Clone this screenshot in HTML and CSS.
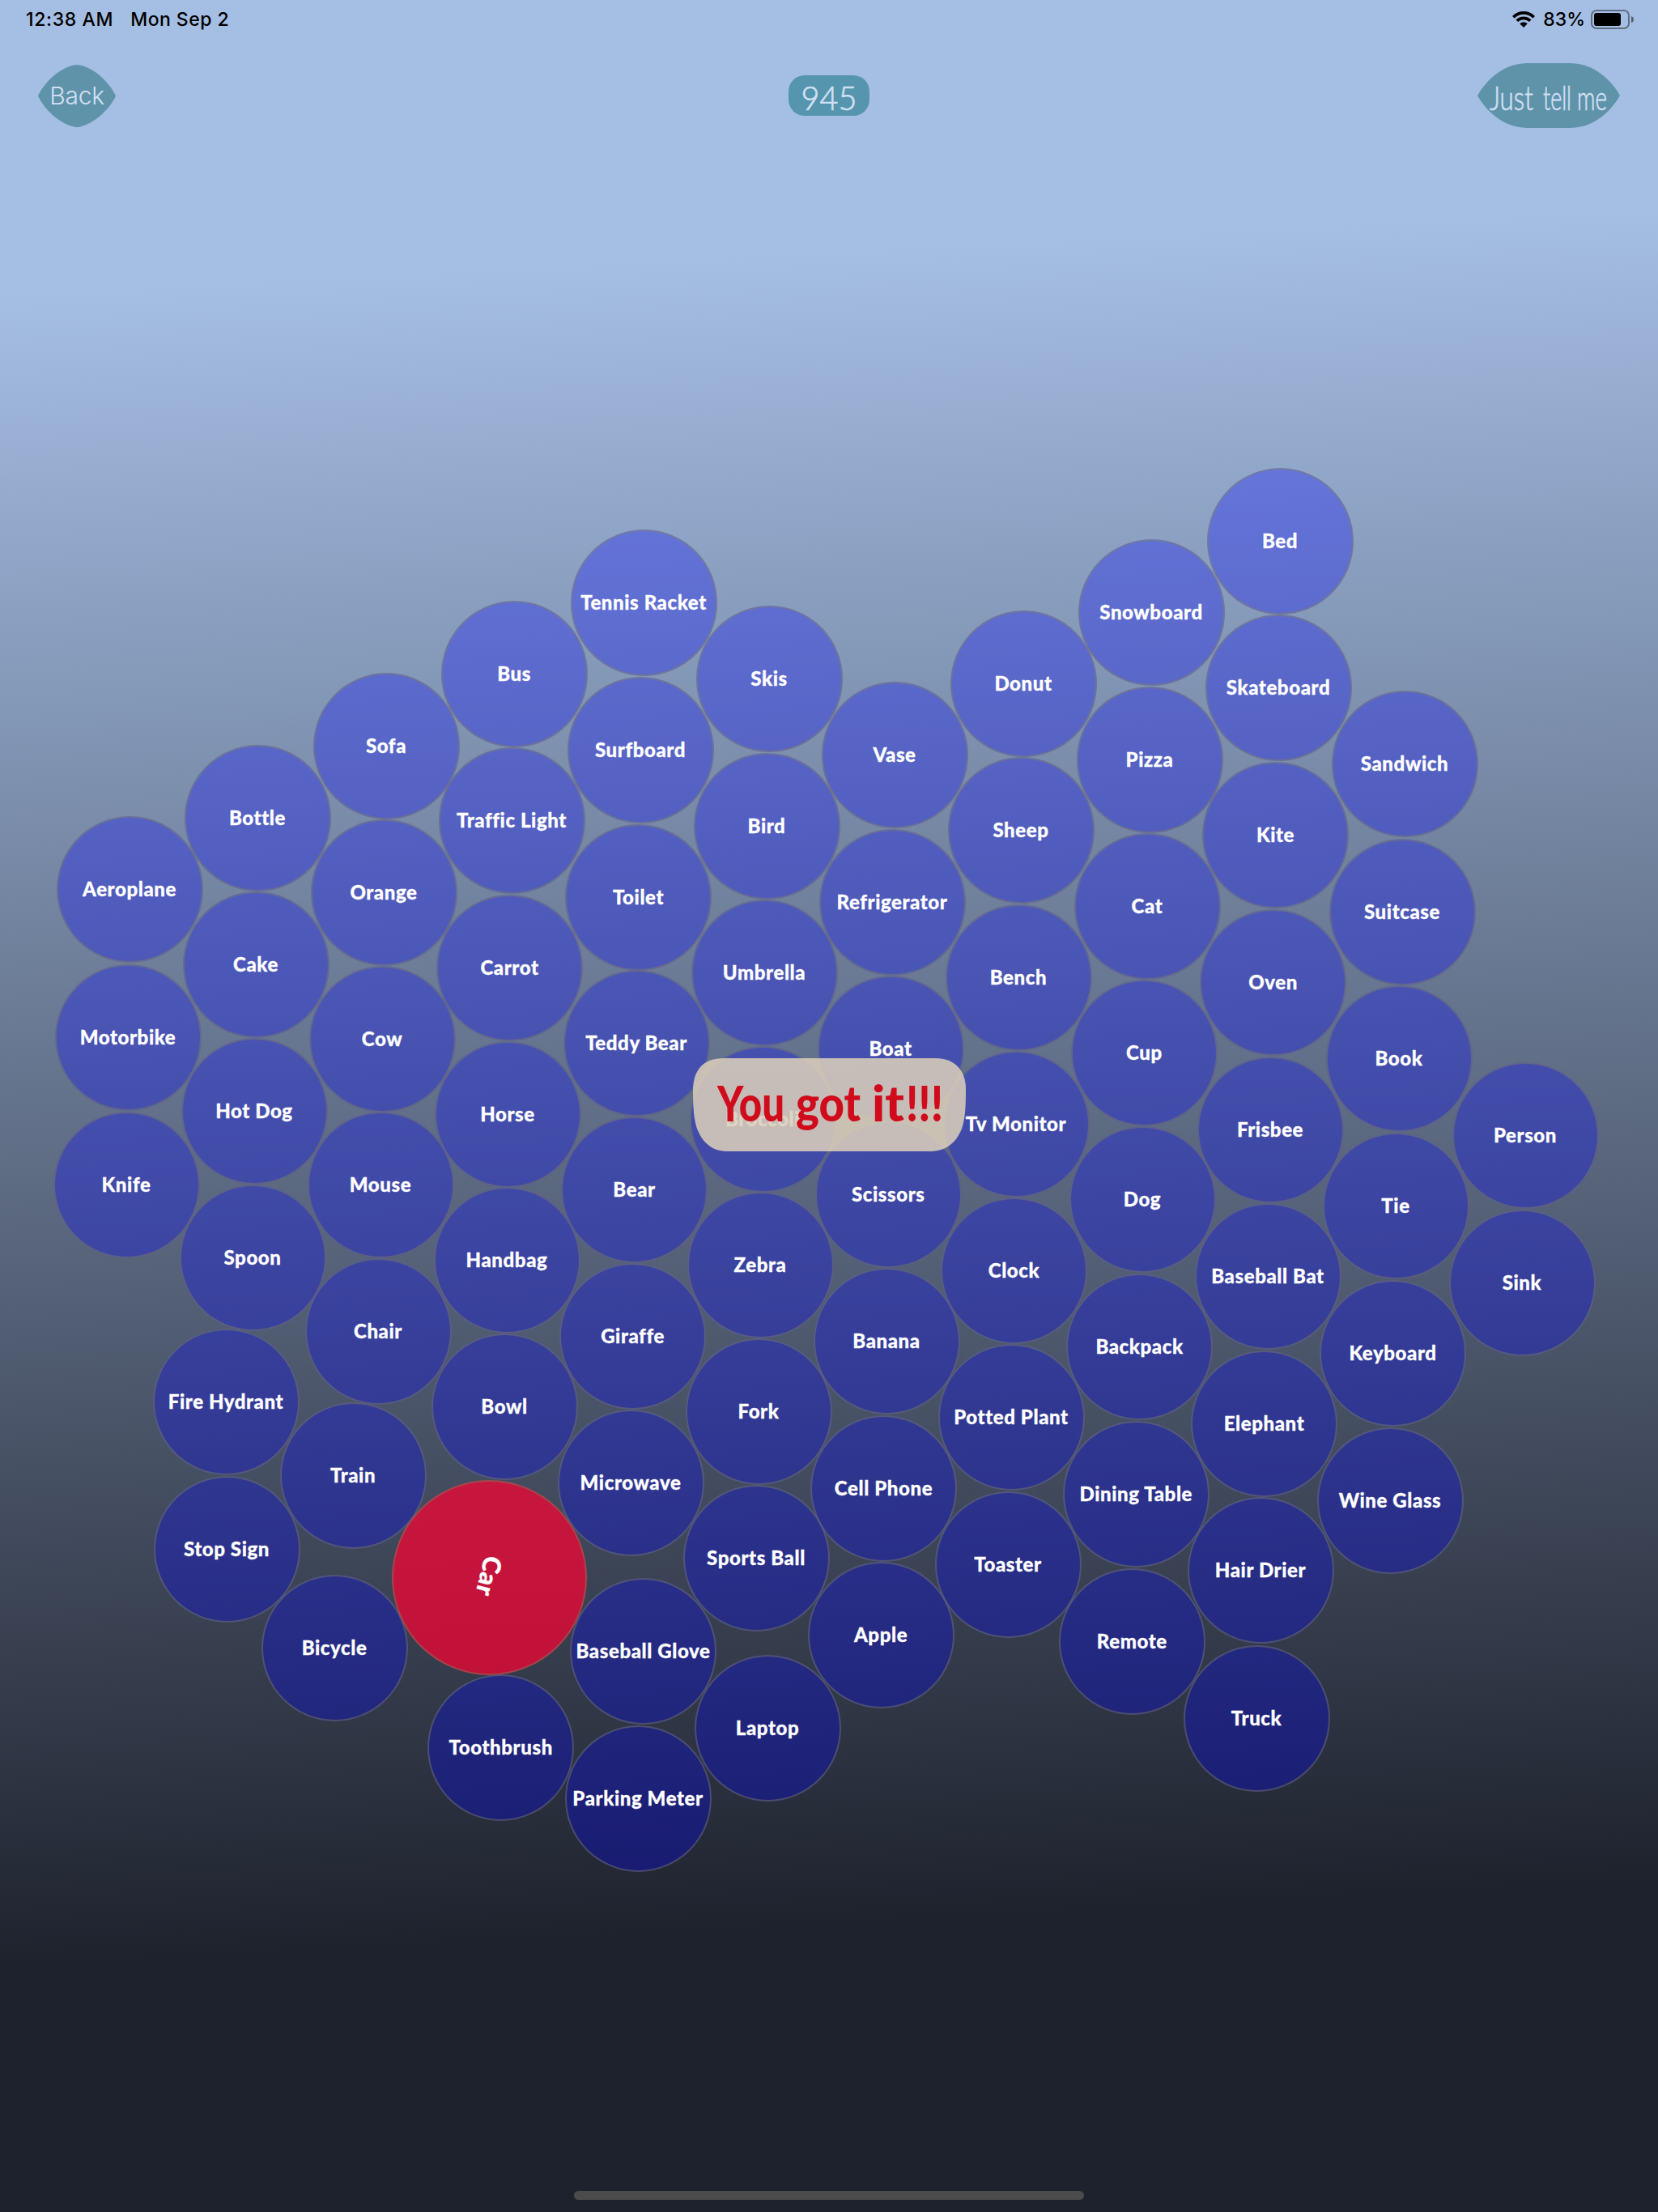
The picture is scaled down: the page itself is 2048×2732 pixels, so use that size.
FILE: index.html
```
<!DOCTYPE html>
<html lang="en">
<head>
<meta charset="utf-8">
<title>Bubbles</title>
<link rel="stylesheet" href="styles.css">
</head>
<body>
<div class="screen">
  <header class="status">
    <span class="time">12:38 AM</span>
    <span class="date">Mon Sep 2</span>
    <span class="spacer"></span>
    <svg class="wifi" viewBox="0 0 28 20" width="28" height="20">
      <g fill="none" stroke="#000" stroke-width="3.7">
        <path d="M1.3 7.2A18 18 0 0 1 26.700 7.200"/>
        <path d="M5.800 11.800A11.700 11.700 0 0 1 22.200 11.800"/>
      </g>
      <path d="M9.200 15.200A7 7 0 0 1 18.800 15.200L14 20Z"/>
    </svg>
    <span class="percent">83%</span>
    <svg class="battery" viewBox="0 0 54 24" width="54" height="24">
      <rect x="1" y="1" width="46" height="22" rx="6" fill="none" stroke="#000" stroke-opacity=".42" stroke-width="2"/>
      <rect x="4" y="4" width="33" height="16" rx="3"/>
      <path d="M50 8q3 1 3 4t-3 4z" fill-opacity=".5"/>
    </svg>
  </header>

  <nav class="toolbar">
    <button class="leaf back">
      <svg class="shape" viewBox="0 0 96 77"><path d="M0 38.500C9 20 27 4.500 44 .6Q48-.6 52 .6C69 4.500 87 20 96 38.500C87 57 69 72.500 52 76.400Q48 77.600 44 76.400C27 72.500 9 57 0 38.500Z"/></svg>
      <span>Back</span>
    </button>
    <div class="score"><svg viewBox="0 0 100 50" width="100" height="50"><text x="15.500" y="43" textLength="69" lengthAdjust="spacingAndGlyphs">945</text></svg></div>
    <button class="leaf tell">
      <svg class="shape" viewBox="0 0 176 80">
        <path d="M0 40C15 14 38 0 62 0H114C138 0 161 14 176 40C161 66 138 80 114 80H62C38 80 15 66 0 40Z"/>
        <text x="15" y="57.500" textLength="54" lengthAdjust="spacingAndGlyphs">Just</text>
        <text x="81" y="57.500" textLength="35" lengthAdjust="spacingAndGlyphs">tell</text>
        <text x="123" y="57.500" textLength="37" lengthAdjust="spacingAndGlyphs">me</text>
      </svg>
    </button>
  </nav>

  <main class="canvas">
    <div class="bubble" style="--x:1581;--y:669">Bed</div>
    <div class="bubble" style="--x:1422;--y:757">Snowboard</div>
    <div class="bubble" style="--x:1579;--y:850">Skateboard</div>
    <div class="bubble" style="--x:1420;--y:939">Pizza</div>
    <div class="bubble" style="--x:1735;--y:944">Sandwich</div>
    <div class="bubble" style="--x:1575.500;--y:1032">Kite</div>
    <div class="bubble" style="--x:1417;--y:1120">Cat</div>
    <div class="bubble" style="--x:160;--y:1099">Aeroplane</div>
    <div class="bubble" style="--x:158;--y:1282">Motorbike</div>
    <div class="bubble" style="--x:156;--y:1463.500">Knife</div>
    <div class="bubble" style="--x:318;--y:1011">Bottle</div>
    <div class="bubble" style="--x:316;--y:1192">Cake</div>
    <div class="bubble" style="--x:314;--y:1373">Hot Dog</div>
    <div class="bubble" style="--x:312;--y:1553.500">Spoon</div>
    <div class="bubble" style="--x:477;--y:922">Sofa</div>
    <div class="bubble" style="--x:474;--y:1103">Orange</div>
    <div class="bubble" style="--x:472;--y:1284">Cow</div>
    <div class="bubble" style="--x:470;--y:1464">Mouse</div>
    <div class="bubble" style="--x:467;--y:1645">Chair</div>
    <div class="bubble" style="--x:635;--y:833">Bus</div>
    <div class="bubble" style="--x:632;--y:1014">Traffic Light</div>
    <div class="bubble" style="--x:629.500;--y:1196">Carrot</div>
    <div class="bubble" style="--x:627;--y:1377">Horse</div>
    <div class="bubble" style="--x:626;--y:1556.500">Handbag</div>
    <div class="bubble" style="--x:623;--y:1737.500">Bowl</div>
    <div class="bubble" style="--x:795;--y:745">Tennis Racket</div>
    <div class="bubble" style="--x:791;--y:927">Surfboard</div>
    <div class="bubble" style="--x:788.500;--y:1108.500">Toilet</div>
    <div class="bubble" style="--x:786;--y:1289">Teddy Bear</div>
    <div class="bubble" style="--x:783.500;--y:1470">Bear</div>
    <div class="bubble" style="--x:781.500;--y:1651">Giraffe</div>
    <div class="bubble" style="--x:779;--y:1831.500">Microwave</div>
    <div class="bubble" style="--x:794.500;--y:2040">Baseball Glove</div>
    <div class="bubble" style="--x:618.700;--y:2159">Toothbrush</div>
    <div class="bubble" style="--x:788;--y:2221.500">Parking Meter</div>
    <div class="bubble" style="--x:950;--y:839">Skis</div>
    <div class="bubble" style="--x:947;--y:1021">Bird</div>
    <div class="bubble" style="--x:944;--y:1202">Umbrella</div>
    <div class="bubble" style="--x:942;--y:1382.500">Broccoli</div>
    <div class="bubble" style="--x:939;--y:1563">Zebra</div>
    <div class="bubble" style="--x:937;--y:1744">Fork</div>
    <div class="bubble" style="--x:934;--y:1925">Sports Ball</div>
    <div class="bubble" style="--x:948;--y:2135">Laptop</div>
    <div class="bubble" style="--x:1105;--y:933">Vase</div>
    <div class="bubble" style="--x:1102;--y:1114.500">Refrigerator</div>
    <div class="bubble" style="--x:1100;--y:1295.500">Boat</div>
    <div class="bubble" style="--x:1097.300;--y:1476">Scissors</div>
    <div class="bubble" style="--x:1095;--y:1657">Banana</div>
    <div class="bubble" style="--x:1091.500;--y:1838.500">Cell Phone</div>
    <div class="bubble" style="--x:1088;--y:2020">Apple</div>
    <div class="bubble" style="--x:1264;--y:845">Donut</div>
    <div class="bubble" style="--x:1261;--y:1026">Sheep</div>
    <div class="bubble" style="--x:1258;--y:1208">Bench</div>
    <div class="bubble" style="--x:1255;--y:1389">Tv Monitor</div>
    <div class="bubble" style="--x:1252.500;--y:1570">Clock</div>
    <div class="bubble" style="--x:1249;--y:1751">Potted Plant</div>
    <div class="bubble" style="--x:1245;--y:1933">Toaster</div>
    <div class="bubble" style="--x:1413.500;--y:1301">Cup</div>
    <div class="bubble" style="--x:1411;--y:1482">Dog</div>
    <div class="bubble" style="--x:1407.500;--y:1663.500">Backpack</div>
    <div class="bubble" style="--x:1403.300;--y:1845.500">Dining Table</div>
    <div class="bubble" style="--x:1398.300;--y:2027.500">Remote</div>
    <div class="bubble" style="--x:1572.500;--y:1214">Oven</div>
    <div class="bubble" style="--x:1569;--y:1396">Frisbee</div>
    <div class="bubble" style="--x:1566;--y:1577">Baseball Bat</div>
    <div class="bubble" style="--x:1561.500;--y:1759">Elephant</div>
    <div class="bubble" style="--x:1557;--y:1940">Hair Drier</div>
    <div class="bubble" style="--x:1552;--y:2122.500">Truck</div>
    <div class="bubble" style="--x:1732;--y:1127">Suitcase</div>
    <div class="bubble" style="--x:1728;--y:1308">Book</div>
    <div class="bubble" style="--x:1724;--y:1490">Tie</div>
    <div class="bubble" style="--x:1720.500;--y:1671.500">Keyboard</div>
    <div class="bubble" style="--x:1717;--y:1854">Wine Glass</div>
    <div class="bubble" style="--x:1884;--y:1403">Person</div>
    <div class="bubble" style="--x:1880;--y:1584.500">Sink</div>
    <div class="bubble" style="--x:279;--y:1731.500">Fire Hydrant</div>
    <div class="bubble" style="--x:436;--y:1823">Train</div>
    <div class="bubble" style="--x:280;--y:1913.500">Stop Sign</div>
    <div class="bubble" style="--x:413;--y:2036">Bicycle</div>
    <div class="bubble hit" style="--x:604.500;--y:1948.500"><span>Car</span></div>

    <svg class="toast" viewBox="0 0 337 115" width="337" height="115">
      <path d="M0 40C0 14 13 0 38 0H300C322 0 337 14 337 38C337 62 336 75 332 87C325 105 312 115 292 115H43C24 115 12 105 5 87C1 75 0 62 0 40Z"/>
      <text x="30" y="78" textLength="83" lengthAdjust="spacingAndGlyphs">You</text>
      <text x="127" y="78" textLength="80" lengthAdjust="spacingAndGlyphs">got</text>
      <text x="221" y="78" textLength="40" lengthAdjust="spacingAndGlyphs">it</text>
      <text x="263" y="78" textLength="46" lengthAdjust="spacingAndGlyphs">!!!</text>
    </svg>
  </main>
  <div class="home"></div>
</div>
</body>
</html>
```
FILE: styles.css
```
* { box-sizing: border-box; }

body { margin: 0; }

.screen {
  position: relative;
  display: flex;
  flex-direction: column;
  width: 2048px;
  height: 2732px;
  overflow: hidden;
  background: linear-gradient(177deg, #a5bee4 362px, #1e222d 2428px);
  font-family: Inter, "Liberation Sans", sans-serif;
}

.status {
  display: flex;
  align-items: center;
  height: 48px;
  padding: 0 29px 0 32px;
  color: #000;
  font-size: 23px;
  font-weight: 500;
}
.time { letter-spacing: .65px; }
.date { margin-left: 21px; letter-spacing: .45px; }
.spacer { flex: 1; }
.percent { margin: 0 7px 0 10px; }

.toolbar {
  display: flex;
  align-items: center;
  justify-content: space-between;
  height: 140px;
  padding: 0 47px;
}

.leaf {
  position: relative;
  display: grid;
  place-items: center;
  padding: 0;
  border: 0;
  background: none;
  color: #d3e0f5;
  font: 400 30px Inter, sans-serif;
}
.leaf .shape {
  grid-area: 1 / 1;
  width: 100%;
  height: 100%;
  fill: #5f93aa;
}
.leaf span { grid-area: 1 / 1; font-weight: 350; letter-spacing: -.3px; }
.leaf text, .score text {
  fill: #d3e0f5;
  stroke: #d3e0f5;
  stroke-width: .7px;
  font-family: Lato, sans-serif;
  font-weight: 300;
  font-size: 41px;
}
svg { overflow: visible; }
.back { width: 96px; height: 77px; }
.tell { width: 176px; height: 80px; }

.score {
  width: 100px;
  height: 50px;
  margin-left: 80px;
  border-radius: 20px;
  background: #5595ae;
}

.canvas { flex: 1; }

.bubble {
  --r: 90.5px;
  position: absolute;
  left: calc(var(--x) * 1px - var(--r));
  top: calc(var(--y) * 1px - .5px - var(--r));
  display: flex;
  align-items: center;
  justify-content: center;
  width: calc(var(--r) * 2);
  height: calc(var(--r) * 2);
  padding-bottom: 2px;
  border: 2px solid rgba(128, 128, 100, .45);
  border-radius: 50%;
  background: rgba(0, 0, 255, .3) border-box;
  color: #fff;
  font: 900 24px Lato, sans-serif;
  letter-spacing: .6px;
  white-space: nowrap;
  -webkit-text-stroke: .3px #fff;
}
.hit {
  --r: 120.5px;
  background-color: rgba(255, 0, 48, .7);
  font-size: 31px;
}
.hit span { transform: rotate(104deg); }

.toast {
  position: absolute;
  left: 856px;
  top: 1307px;
}
.toast path { fill: rgba(218, 206, 186, .87); }
.toast text {
  fill: #d00b1b;
  font: 900 60px Lato, sans-serif;
}

.home {
  align-self: center;
  width: 630px;
  height: 11px;
  margin-bottom: 15px;
  border-radius: 6px;
  background: #4b4b4b;
}
```
